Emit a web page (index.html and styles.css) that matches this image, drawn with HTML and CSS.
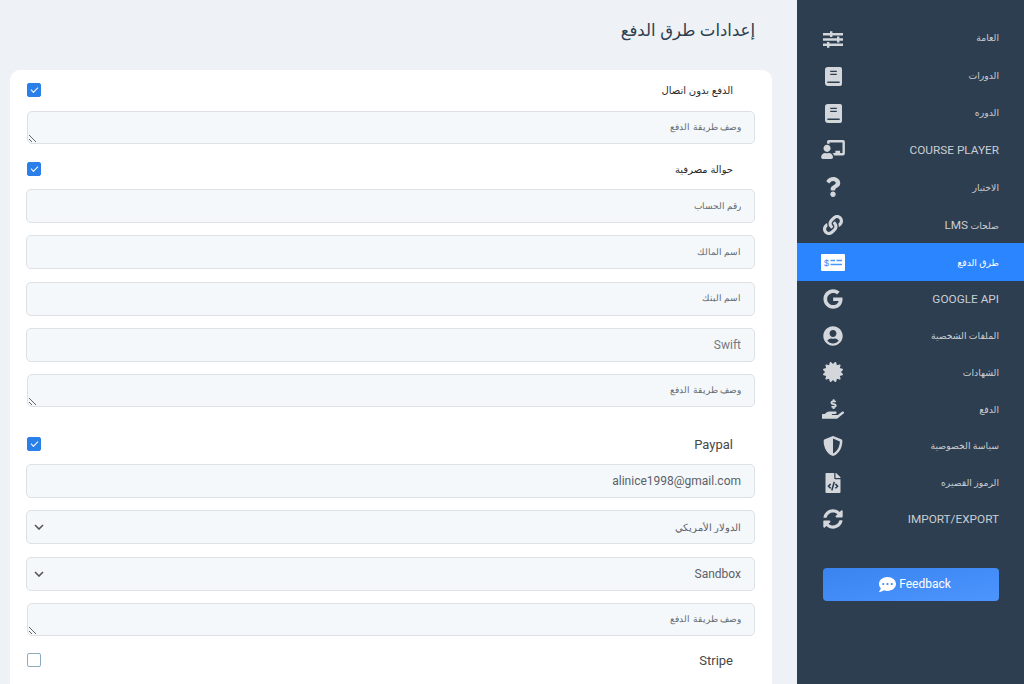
FILE: index.html
```html
<!DOCTYPE html>
<html lang="ar" dir="rtl">
<head>
    <meta charset="UTF-8">
    <meta name="viewport" content="width=device-width, initial-scale=1.0">
    <title>إعدادات طرق الدفع</title>
    <link rel="stylesheet" href="styles.css">
</head>
<body>
    <div class="page">
        <!-- Sidebar -->
        <aside class="sidebar">
            <nav class="side-nav">
                <a class="side-item"><span>العامة</span>
                    <svg class="side-icon sliders" viewBox="0 0 20 17"><path d="M0 2h20v2.400H0zM0 7.300h20v2.400H0zM0 12.600h20V15H0z"/><path d="M7 .3h2.400v5.800H7zM14 5.600h2.400v5.800H14zM4 10.900h2.400v5.800H4z"/></svg>
                </a>
                <a class="side-item"><span>الدورات</span>
                    <svg class="side-icon book" viewBox="0 0 18 20"><path fill-rule="evenodd" d="M3 0h13a2 2 0 0 1 2 2v16a2 2 0 0 1-2 2H3a3 3 0 0 1-3-3V3a3 3 0 0 1 3-3zm2.500 4v1.300h7V4zm0 3v1.300h7V7zM2.500 15.300v1.500h13v-1.500z"/></svg>
                </a>
                <a class="side-item"><span>الدوره</span>
                    <svg class="side-icon book" viewBox="0 0 18 20"><path fill-rule="evenodd" d="M3 0h13a2 2 0 0 1 2 2v16a2 2 0 0 1-2 2H3a3 3 0 0 1-3-3V3a3 3 0 0 1 3-3zm2.500 4v1.300h7V4zm0 3v1.300h7V7zM2.500 15.300v1.500h13v-1.500z"/></svg>
                </a>
                <a class="side-item"><span class="latin">COURSE PLAYER</span>
                    <svg class="side-icon teacher" viewBox="0 0 640 512"><path d="M208 352c-2.390 0-4.780.35-7.060 1.090C187.980 357.300 174.350 360 160 360c-14.350 0-27.980-2.700-40.950-6.910-2.280-.74-4.660-1.090-7.050-1.090C49.940 352-.33 402.480 0 464.620.14 490.880 21.730 512 48 512h224c26.270 0 47.860-21.120 48-47.380.33-62.140-49.940-112.620-112-112.620zm-48-32c53.020 0 96-42.980 96-96s-42.980-96-96-96-96 42.980-96 96 42.980 96 96 96zM592 0H208c-26.470 0-48 22.250-48 49.590V96c23.420 0 45.100 6.780 64 17.800V64h352v288h-64v-64H384v64h-76.240c19.100 16.690 33.120 38.730 39.690 64H592c26.470 0 48-22.250 48-49.590V49.590C640 22.250 618.470 0 592 0z"/></svg>
                </a>
                <a class="side-item"><span>الاختبار</span>
                    <svg class="side-icon" viewBox="0 0 384 512"><path d="M202.021 0C122.202 0 70.503 32.703 29.914 91.026c-7.363 10.580-5.093 25.086 5.178 32.874l43.138 32.709c10.373 7.865 25.132 6.026 33.253-4.148 25.049-31.381 43.630-49.449 82.757-49.449 30.764 0 68.816 19.799 68.816 49.631 0 22.552-18.617 34.134-48.993 51.164-35.423 19.860-82.299 44.576-82.299 106.405V320c0 13.255 10.745 24 24 24h72.471c13.255 0 24-10.745 24-24v-5.773c0-42.860 125.268-44.645 125.268-160.627C377.504 66.256 286.902 0 202.021 0zM192 373.459c-38.196 0-69.271 31.075-69.271 69.271 0 38.195 31.075 69.270 69.271 69.270s69.271-31.075 69.271-69.271-31.075-69.270-69.271-69.270z"/></svg>
                </a>
                <a class="side-item"><span>صلحات <span class="latin">LMS</span></span>
                    <svg class="side-icon" viewBox="0 0 512 512"><path d="M326.612 185.391c59.747 59.809 58.927 155.698.36 214.590-.11.12-.24.25-.36.37l-67.200 67.200c-59.270 59.270-155.699 59.262-214.960 0-59.270-59.260-59.270-155.700 0-214.960l37.106-37.106c9.840-9.840 26.786-3.300 27.294 10.606.648 17.722 3.826 35.527 9.690 52.721 1.986 5.822.567 12.262-3.783 16.612l-13.087 13.087c-28.026 28.026-28.905 73.660-1.155 101.960 28.024 28.579 74.086 28.749 102.325.51l67.200-67.190c28.191-28.191 28.073-73.757 0-101.830-3.701-3.694-7.429-6.564-10.341-8.569a16.037 16.037 0 0 1-6.947-12.606c-.396-10.567 3.348-21.456 11.698-29.806l21.054-21.055c5.521-5.521 14.182-6.199 20.584-1.731a152.482 152.482 0 0 1 20.522 17.197zM467.547 44.449c-59.261-59.262-155.690-59.270-214.960 0l-67.200 67.200c-.12.12-.25.25-.36.37-58.566 58.892-59.387 154.781.36 214.590a152.454 152.454 0 0 0 20.521 17.196c6.402 4.468 15.064 3.789 20.584-1.731l21.054-21.055c8.350-8.350 12.094-19.239 11.698-29.806a16.037 16.037 0 0 0-6.947-12.606c-2.912-2.005-6.640-4.875-10.341-8.569-28.073-28.073-28.191-73.639 0-101.830l67.200-67.190c28.239-28.239 74.300-28.069 102.325.51 27.750 28.300 26.872 73.934-1.155 101.960l-13.087 13.087c-4.350 4.350-5.769 10.790-3.783 16.612 5.864 17.194 9.042 34.999 9.690 52.721.509 13.906 17.454 20.446 27.294 10.606l37.106-37.106c59.271-59.259 59.271-155.699.001-214.959z"/></svg>
                </a>
                <a class="side-item active"><span>طرق الدفع</span>
                    <svg class="side-icon money" viewBox="0 0 24 17"><rect width="24" height="17" rx="1" fill="#fff"/><text x="5.500" y="11.500" text-anchor="middle" class="money-sign">$</text><path d="M9.500 6.500h4.500M15.500 6.500h5.500M9.500 10.500h11.500" stroke="#4a97ff" stroke-width="1.300"/></svg>
                </a>
                <a class="side-item"><span class="latin">GOOGLE API</span>
                    <svg class="side-icon" viewBox="0 0 488 512"><path d="M488 261.800C488 403.300 391.100 504 248 504 110.800 504 0 393.200 0 256S110.800 8 248 8c66.800 0 123 24.500 166.300 64.900l-67.500 64.900C258.500 52.600 94.300 116.600 94.300 256c0 86.500 69.100 156.600 153.700 156.600 98.200 0 135-70.400 140.800-106.900H248v-85.300h236.100c2.300 12.700 3.900 24.900 3.900 41.400z"/></svg>
                </a>
                <a class="side-item"><span>الملفات الشخصية</span>
                    <svg class="side-icon" viewBox="0 0 496 512"><path d="M248 8C111 8 0 119 0 256s111 248 248 248 248-111 248-248S385 8 248 8zm0 96c48.600 0 88 39.400 88 88s-39.400 88-88 88-88-39.400-88-88 39.400-88 88-88zm0 344c-58.700 0-111.300-26.600-146.500-68.200 18.800-35.400 55.600-59.800 98.500-59.800 2.400 0 4.800.4 7.100 1.100 13 4.200 26.600 6.900 40.900 6.900 14.300 0 28-2.700 40.900-6.900 2.300-.7 4.700-1.100 7.100-1.100 42.900 0 79.700 24.400 98.500 59.800C359.300 421.400 306.700 448 248 448z"/></svg>
                </a>
                <a class="side-item"><span>الشهادات</span>
                    <svg class="side-icon" viewBox="0 0 512 512"><path d="M458.622 255.920l45.985-45.005c13.708-12.977 7.316-36.039-10.664-40.339l-62.650-15.990 17.661-62.015c4.991-17.838-11.829-34.663-29.661-29.671l-61.994 17.667-15.984-62.671C337.085.197 313.765-6.276 300.990 7.228L256 53.570 211.011 7.229c-12.630-13.351-36.047-7.234-40.325 10.668l-15.984 62.671-61.995-17.667C74.870 57.907 58.056 74.738 63.046 92.572l17.661 62.015-62.650 15.990C.069 174.878-6.310 197.944 7.392 210.915l45.985 45.005-45.985 45.004c-13.708 12.977-7.316 36.039 10.664 40.339l62.650 15.990-17.661 62.015c-4.991 17.838 11.829 34.663 29.661 29.671l61.994-17.667 15.984 62.671c4.439 18.575 27.696 24.018 40.325 10.668L256 458.610l44.989 46.001c12.500 13.488 35.987 7.486 40.325-10.668l15.984-62.671 61.994 17.667c17.836 4.994 34.651-11.837 29.661-29.671l-17.661-62.015 62.650-15.990c17.987-4.302 24.366-27.367 10.664-40.339l-45.984-45.004z"/></svg>
                </a>
                <a class="side-item"><span>الدفع</span>
                    <svg class="side-icon" viewBox="0 0 576 512"><path d="M271.060 144.300l54.270 14.300a8.590 8.590 0 0 1 6.630 8.100c0 4.600-4.090 8.400-9.120 8.400h-35.600a30 30 0 0 1-11.190-2.200c-5.240-2.200-11.280-1.700-15.300 2l-19 17.500a11.680 11.680 0 0 0-2.250 2.660 11.420 11.420 0 0 0 3.880 15.740 83.420 83.420 0 0 0 34.510 11.500V240c0 8.800 7.830 16 17.370 16h17.370c9.550 0 17.380-7.200 17.380-16V222.400c32.930-3.600 57.840-31 53.500-63-3.150-23-22.460-41.300-46.560-47.700L282.680 97.400a8.590 8.590 0 0 1-6.630-8.100c0-4.600 4.090-8.400 9.120-8.400h35.600A30 30 0 0 1 332 83.100c5.230 2.200 11.280 1.700 15.300-2l19-17.500A11.310 11.310 0 0 0 368.560 61a11.430 11.430 0 0 0-3.840-15.780 83.820 83.820 0 0 0-34.520-11.500V16c0-8.800-7.820-16-17.370-16H295.460c-9.540 0-17.370 7.200-17.370 16V33.600c-32.890 3.600-57.850 31-53.510 63C227.730 119.600 247 137.900 271.060 144.300zM565.270 328.100c-11.800-10.700-30.200-10-42.600 0L430.270 402a63.640 63.640 0 0 1-40 14H272a16 16 0 0 1 0-32h78.290c15.900 0 30.710-10.900 33.250-26.600a31.200 31.200 0 0 0 .46-5.460A32 32 0 0 0 352 320H192a117.660 117.660 0 0 0-74.100 26.290L71.400 384H16A16 16 0 0 0 0 400v96a16 16 0 0 0 16 16H372.770a64 64 0 0 0 40-14L564 377a32 32 0 0 0 1.280-48.900z"/></svg>
                </a>
                <a class="side-item"><span>سياسة الخصوصية</span>
                    <svg class="side-icon" viewBox="0 0 512 512"><path d="M466.500 83.700l-192-80a48.150 48.150 0 0 0-36.900 0l-192 80C27.700 91.100 16 108.600 16 128c0 198.500 114.500 335.700 221.500 380.300 11.800 4.900 25.100 4.900 36.900 0C360.100 472.600 496 349.300 496 128c0-19.400-11.700-36.900-29.500-44.300zM256.100 446.300l-.1-381 175.900 73.300c-3.300 151.400-82.100 261.100-175.800 307.700z"/></svg>
                </a>
                <a class="side-item"><span>الرموز القصيره</span>
                    <svg class="side-icon" viewBox="0 0 384 512"><path d="M384 121.941V128H256V0h6.059c6.365 0 12.470 2.529 16.971 7.029l97.941 97.941A24.005 24.005 0 0 1 384 121.941zM248 160c-13.200 0-24-10.800-24-24V0H24C10.745 0 0 10.745 0 24v464c0 13.255 10.745 24 24 24h336c13.255 0 24-10.745 24-24V160H248zM123.206 400.505a5.400 5.400 0 0 1-7.633.246l-64.866-60.812a5.400 5.400 0 0 1 0-7.879l64.866-60.812a5.400 5.400 0 0 1 7.633.246l19.579 20.885a5.400 5.400 0 0 1-.372 7.747L101.650 336l40.763 35.874a5.400 5.400 0 0 1 .372 7.747l-19.579 20.884zm51.295 50.479l-27.453-7.970a5.402 5.402 0 0 1-3.681-6.692l61.440-211.626a5.402 5.402 0 0 1 6.692-3.681l27.452 7.970a5.400 5.400 0 0 1 3.680 6.692l-61.440 211.626a5.397 5.397 0 0 1-6.690 3.681zm160.792-111.045l-64.866 60.812a5.400 5.400 0 0 1-7.633-.246l-19.580-20.885a5.400 5.400 0 0 1 .372-7.747L284.350 336l-40.763-35.874a5.400 5.400 0 0 1-.372-7.747l19.580-20.885a5.400 5.400 0 0 1 7.633-.246l64.866 60.812a5.400 5.400 0 0 1-.001 7.879z"/></svg>
                </a>
                <a class="side-item"><span class="latin">IMPORT/EXPORT</span>
                    <svg class="side-icon" viewBox="0 0 512 512"><path d="M370.720 133.280C339.458 104.008 298.888 87.962 255.848 88c-77.458.068-144.328 53.178-162.791 126.850-1.344 5.363-6.122 9.150-11.651 9.150H24.103c-7.498 0-13.194-6.807-11.807-14.176C33.933 94.924 134.813 8 256 8c66.448 0 126.791 26.136 171.315 68.685L463.030 40.970C478.149 25.851 504 36.559 504 57.941V192c0 13.255-10.745 24-24 24H345.941c-21.382 0-32.090-25.851-16.971-40.971l41.750-41.749zM32 296h134.059c21.382 0 32.090 25.851 16.971 40.971l-41.750 41.750c31.262 29.273 71.835 45.319 114.876 45.280 77.418-.07 144.315-53.144 162.787-126.849 1.344-5.363 6.122-9.150 11.651-9.150h57.304c7.498 0 13.194 6.807 11.807 14.176C478.067 417.076 377.187 504 256 504c-66.448 0-126.791-26.136-171.315-68.685L48.970 471.030C33.851 486.149 8 475.441 8 454.059V320c0-13.255 10.745-24 24-24z"/></svg>
                </a>
            </nav>
            <button class="feedback" type="button">
                <svg class="feedback-icon" viewBox="0 0 512 512"><path d="M256 32C114.600 32 0 125.100 0 240c0 49.600 21.400 95 57 130.700C44.500 421.100 2.700 466 2.200 466.500c-2.200 2.300-2.800 5.700-1.500 8.700S4.800 480 8 480c66.300 0 116-31.800 140.600-51.400 32.700 12.300 69 19.400 107.400 19.400 141.400 0 256-93.100 256-208S397.400 32 256 32zM128 272c-17.700 0-32-14.300-32-32s14.300-32 32-32 32 14.300 32 32-14.300 32-32 32zm128 0c-17.700 0-32-14.300-32-32s14.300-32 32-32 32 14.300 32 32-14.300 32-32 32zm128 0c-17.700 0-32-14.300-32-32s14.300-32 32-32 32 14.300 32 32-14.300 32-32 32z"/></svg>
                <span dir="ltr">Feedback</span>
            </button>
        </aside>

        <!-- Main content -->
        <main class="main">
            <h1 class="page-title">إعدادات طرق الدفع</h1>
            <form class="card">
                <div class="method-head">
                    <span class="method-name">الدفع بدون اتصال</span>
                    <input class="check" type="checkbox" checked>
                </div>
                <textarea class="field area ar" placeholder="وصف طريقة الدفع"></textarea>

                <div class="method-head method-gap">
                    <span class="method-name">حوالة مصرفية</span>
                    <input class="check" type="checkbox" checked>
                </div>
                <input class="field ar" type="text" placeholder="رقم الحساب">
                <input class="field ar" type="text" placeholder="اسم المالك">
                <input class="field ar" type="text" placeholder="اسم البنك">
                <input class="field" type="text" placeholder="Swift">
                <textarea class="field area ar" placeholder="وصف طريقة الدفع"></textarea>

                <div class="method-head method-gap-lg">
                    <span class="method-name latin">Paypal</span>
                    <input class="check" type="checkbox" checked>
                </div>
                <input class="field" type="text" value="alinice1998@gmail.com">
                <select class="field pick ar"><option>الدولار الأمريكي</option></select>
                <select class="field pick"><option>Sandbox</option></select>
                <textarea class="field area ar" placeholder="وصف طريقة الدفع"></textarea>

                <div class="method-head method-last">
                    <span class="method-name latin">Stripe</span>
                    <input class="check" type="checkbox">
                </div>
            </form>
        </main>
    </div>
</body>
</html>
```

FILE: styles.css
```css
/* Reset */
* {
    margin: 0;
    padding: 0;
    box-sizing: border-box;
}

html, body {
    height: 100%;
    overflow: hidden;
}

body {
    font-family: Roboto, "Liberation Sans", "DejaVu Sans", sans-serif;
    background: #eef1f5;
    color: #2d3e50;
}

.page {
    display: flex;
    height: 684px;
    overflow: hidden;
}

/* Sidebar */
.sidebar {
    flex: 0 0 227px;
    background: #2d3e50;
    padding-top: 19px;
}

.side-item {
    display: flex;
    justify-content: space-between;
    align-items: center;
    height: 37.4px;
    padding: 0 25px;
    font-size: 9.3px;
    color: #c9ced4;
}

.side-item:nth-child(n+8) {
    height: 36.7px;
}

.side-item .latin {
    font-size: 11.800px;
}

.side-item.active {
    background: #2b85ff;
    color: #fff;
    font-weight: 500;
}

.side-icon {
    width: 22px;
    height: 20px;
    fill: #d3d6da;
}

.sliders {
    width: 20px;
    height: 17px;
    margin: 4px 1px 0 0;
    margin-left: 1px;
}

.book {
    width: 17px;
    height: 19px;
    margin: 2px 0 0 3px;
}

.teacher {
    width: 24px;
    height: 19px;
    margin-left: -1px;
}

.money {
    width: 24px;
    height: 17px;
    margin-left: -1px;
}

.money-sign {
    font-family: "Liberation Sans", sans-serif;
    font-size: 9px;
    fill: #2b85ff;
}

.feedback {
    display: flex;
    justify-content: center;
    align-items: center;
    flex-direction: row-reverse;
    gap: 3px;
    width: 176px;
    height: 33px;
    margin: 30.3px 25px 0 0;
    padding-left: 8px;
    border: none;
    border-radius: 4px;
    background: linear-gradient(to left top, #4c95ff, #3a84f0);
    color: #fff;
    font-family: Roboto, sans-serif;
    font-size: 12px;
}

.feedback-icon {
    width: 17px;
    height: 17px;
    fill: #fff;
}

/* Main */
.main {
    flex: 1;
    padding: 0 25px 0 11px;
}

.page-title {
    height: 70px;
    padding: 21px 17px 0 0;
    font-family: "Liberation Sans", "DejaVu Sans", sans-serif;
    font-size: 16.500px;
    font-weight: 400;
    color: #2d3e50;
}

.card {
    display: flex;
    flex-direction: column;
    padding: 13px 17px 30px 16px;
    background: #fff;
    border-radius: 10px;
}

.method-head {
    display: flex;
    justify-content: space-between;
    align-items: center;
    height: 14px;
    margin-bottom: 14px;
    padding-right: 22px;
    padding-left: 1px;
    color: #2a2a2a;
}

.method-gap {
    margin-top: 18px;
    margin-bottom: 13px;
}

.method-gap-lg {
    margin-top: 30px;
    margin-bottom: 13px;
}

.method-last {
    margin-top: 17px;
    margin-bottom: 0;
}

.method-name {
    font-family: "Liberation Sans", "DejaVu Sans", sans-serif;
    font-size: 10px;
}

.method-name.latin {
    font-family: Roboto, sans-serif;
    font-size: 13px;
    color: #484848;
}

.check {
    appearance: none;
    position: relative;
    width: 14px;
    height: 14px;
    border: 1px solid #8fa9bd;
    border-radius: 2px;
    background: #fff;
}

.check:checked {
    border-color: #2b7fe8;
    background: #2b7fe8;
}

.check:checked::after {
    content: "";
    position: absolute;
    top: 2.500px;
    left: 3px;
    width: 6px;
    height: 3px;
    border-left: 1.600px solid #fff;
    border-bottom: 1.600px solid #fff;
    transform: rotate(-45deg);
}

.field {
    display: block;
    flex: none;
    width: 729px;
    height: 34px;
    margin-bottom: 12.300px;
    padding: 0 13px;
    border: 1px solid #dde1e5;
    border-radius: 5px;
    background-color: #f5f8fb;
    font-family: Roboto, "Liberation Sans", sans-serif;
    font-size: 12px;
    color: #5a6168;
    outline: none;
}

.field::placeholder {
    color: #737a80;
    opacity: 1;
}

.field.ar {
    font-size: 10px;
}

.field.ar::placeholder {
    font-size: 9.200px;
    color: #646b72;
}

input.field.ar {
    padding-bottom: 2px;
}

.pick {
    appearance: none;
    background-image: url("data:image/svg+xml,%3Csvg xmlns='http://www.w3.org/2000/svg' viewBox='0 0 10 6'%3E%3Cpath d='M1 1l4 4 4-4' fill='none' stroke='%23555' stroke-width='1.600'/%3E%3C/svg%3E");
    background-repeat: no-repeat;
    background-position: left 7px center;
    background-size: 10px 6px;
}

.area {
    width: 728px;
    height: 33px;
    margin-bottom: 0;
    padding-top: 7px;
    line-height: 15px;
}
```
